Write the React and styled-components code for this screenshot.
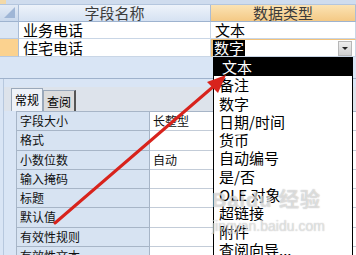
import React from 'react';
import styled, { createGlobalStyle } from 'styled-components';

const GlobalStyle = createGlobalStyle`
  body {
    margin: 0;
    font-family: "Noto Sans CJK SC", "Noto Sans", sans-serif;
  }
`;

const Screen = styled.div`
  position: relative;
  width: 356px;
  height: 255px;
  overflow: hidden;
  background: #d9e5f5;
`;

const TopStrip = styled.div`
  height: 4px;
  background: linear-gradient(90deg, #f3d9a8 0, #f3d9a8 6px, #cfdcee 6px);
  border-bottom: 1px solid #b4c6de;
`;

const DesignGrid = styled.div`
  display: grid;
  grid-template-columns: 19px 192px 1fr;
  grid-auto-rows: 17px;
  grid-template-rows: 17px 17px 18px;
`;

const HeaderCell = styled.div`
  background: ${p => (p.$active
    ? 'linear-gradient(#fbe3b4, #f4c985)'
    : 'linear-gradient(#eef3fa, #d6e2f2)')};
  border-right: 1px solid #a9bcd6;
  border-bottom: 1px solid #9eb3cf;
  color: #3b3b3b;
  font-size: 15px;
  line-height: 16px;
  text-align: center;
`;

const Corner = styled.div`
  position: relative;
  background: linear-gradient(#e3ebf6, #c9d8ec);
  border-right: 1px solid #a9bcd6;
  border-bottom: 1px solid #9eb3cf;
  &::after {
    content: '';
    position: absolute;
    right: 3px;
    bottom: 3px;
    border-left: 11px solid transparent;
    border-bottom: 11px solid #9fb6d6;
  }
`;

const Selector = styled.div`
  background: ${p => (p.$current ? '#fbd28f' : '#dbe6f4')};
  border-right: 1px solid #a9bcd6;
  border-bottom: 1px solid #b8c9df;
`;

const Cell = styled.div`
  position: relative;
  background: #fff;
  border-bottom: 1px solid #c9d6e6;
  border-right: 1px solid #c9d6e6;
  border-top: ${p => (p.$focus ? '1px solid #f2c27a' : 'none')};
  border-left: ${p => (p.$focus ? '2px solid #f2c27a' : 'none')};
  font-size: 15px;
  line-height: 16px;
  color: #000;
  padding-left: ${p => (p.$focus ? '0' : '4px')};
  display: flex;
  align-items: center;
`;

const Picked = styled.span`
  background: #000;
  color: #fff;
  padding: 0 1px;
  line-height: 16px;
`;

const ComboButton = styled.div`
  position: absolute;
  right: 3px;
  top: 1px;
  width: 14px;
  height: 15px;
  background: linear-gradient(#eeeeee, #cfcfcf);
  border: 1px solid #b7b7b7;
  box-sizing: border-box;
  display: flex;
  align-items: center;
  justify-content: center;
  &::after {
    content: '';
    border-left: 3px solid transparent;
    border-right: 3px solid transparent;
    border-top: 3px solid #222;
  }
`;

const Gap = styled.div`
  height: 21px;
  border-bottom: 1px solid #9fb2cc;
`;

const PropertyPane = styled.div`
  padding: 8px 0 0 10px;
  border-left: 1px solid #b7c8de;
  margin-left: 3px;
`;

const TabStrip = styled.div`
  display: flex;
  height: 24px;
  align-items: flex-end;
  background: #dde3eb;
  margin-left: -10px;
  padding-left: 7px;
`;

const Tab = styled.div`
  height: ${p => (p.$active ? '23px' : '21px')};
  padding: 0 3px;
  font-size: 12px;
  line-height: 21px;
  color: #000;
  background: ${p => (p.$active ? '#eef2f8' : '#dcdcdc')};
  border: 1px solid #9aa8ba;
  border-bottom: none;
  border-right: ${p => (p.$active ? '1px solid #9aa8ba' : '2px solid #555')};
  box-sizing: border-box;
`;

const PropGrid = styled.div`
  display: grid;
  grid-template-columns: 133px 1fr;
  grid-auto-rows: 19.3px;
  margin-left: 2px;
  border-top: 1px solid #a7b5c7;
  border-left: 1px solid #a7b5c7;
`;

const PropLabel = styled.div`
  background: #d7e3f2;
  border-right: 1px solid #a7b5c7;
  border-bottom: 1px solid #a7b5c7;
  font-size: 12px;
  line-height: 18px;
  padding-left: 3px;
  color: #111;
`;

const PropValue = styled.div`
  background: #fff;
  border-bottom: 1px solid #c3ccd8;
  font-size: 12px;
  line-height: 18px;
  padding-left: 3px;
  color: #111;
`;

const DropList = styled.ul`
  position: absolute;
  left: 213px;
  top: 57px;
  width: 140px;
  height: 210px;
  margin: 0;
  padding: 0;
  list-style: none;
  background: #fff;
  border: 1px solid #000;
  box-sizing: border-box;
`;

const DropItem = styled.li`
  height: 18.3px;
  line-height: 18px;
  font-size: 15px;
  padding-left: ${p => (p.$selected ? '8px' : '5px')};
  background: ${p => (p.$selected ? '#000' : 'transparent')};
  color: ${p => (p.$selected ? '#fff' : '#000')};
  white-space: nowrap;
`;

const Overlay = styled.svg`
  position: absolute;
  left: 0;
  top: 0;
  pointer-events: none;
`;

const Watermark = styled.div`
  position: absolute;
  left: 212px;
  top: 190px;
  color: rgba(255, 255, 255, 0.55);
  text-shadow: 0 0 1px rgba(120, 120, 120, 0.6);
  font-family: "Liberation Sans", "Noto Sans CJK SC", sans-serif;
  pointer-events: none;
  line-height: 1;
`;

const MarkBig = styled.div`
  font-size: 20px;
  font-weight: bold;
  letter-spacing: 1px;
`;

const MarkSmall = styled.div`
  font-size: 14px;
  margin-top: 9px;
`;

const props = [
  ['字段大小', '长整型'],
  ['格式', ''],
  ['小数位数', '自动'],
  ['输入掩码', ''],
  ['标题', ''],
  ['默认值', ''],
  ['有效性规则', ''],
  ['有效性文本', ''],
];

const types = ['文本', '备注', '数字', '日期/时间', '货币', '自动编号', '是/否', 'OLE 对象', '超链接', '附件', '查阅向导...'];

export default function App() {
  return (
    <Screen>
      <GlobalStyle />
      <TopStrip />
      <DesignGrid>
        <Corner />
        <HeaderCell>字段名称</HeaderCell>
        <HeaderCell $active>数据类型</HeaderCell>

        <Selector />
        <Cell>业务电话</Cell>
        <Cell>文本</Cell>

        <Selector $current />
        <Cell>住宅电话</Cell>
        <Cell $focus>
          <Picked>数字</Picked>
          <ComboButton />
        </Cell>
      </DesignGrid>
      <Gap />
      <PropertyPane>
        <TabStrip>
          <Tab $active>常规</Tab>
          <Tab>查阅</Tab>
        </TabStrip>
        <PropGrid>
          {props.map(([k, v]) => (
            <React.Fragment key={k}>
              <PropLabel>{k}</PropLabel>
              <PropValue>{v}</PropValue>
            </React.Fragment>
          ))}
        </PropGrid>
      </PropertyPane>

      <DropList>
        {types.map((t, i) => (
          <DropItem key={t} $selected={i === 0}>{t}</DropItem>
        ))}
      </DropList>

      <Watermark>
        <MarkBig>Baidu 经验</MarkBig>
        <MarkSmall>jingyan.baidu.com</MarkSmall>
      </Watermark>

      <Overlay width="356" height="255" viewBox="0 0 356 255">
        <line x1="55" y1="223" x2="214" y2="86" stroke="#d8231c" strokeWidth="3" strokeLinecap="round" />
        <polygon points="226,75 207,82 218,93" fill="#d8231c" />
      </Overlay>
    </Screen>
  );
}
